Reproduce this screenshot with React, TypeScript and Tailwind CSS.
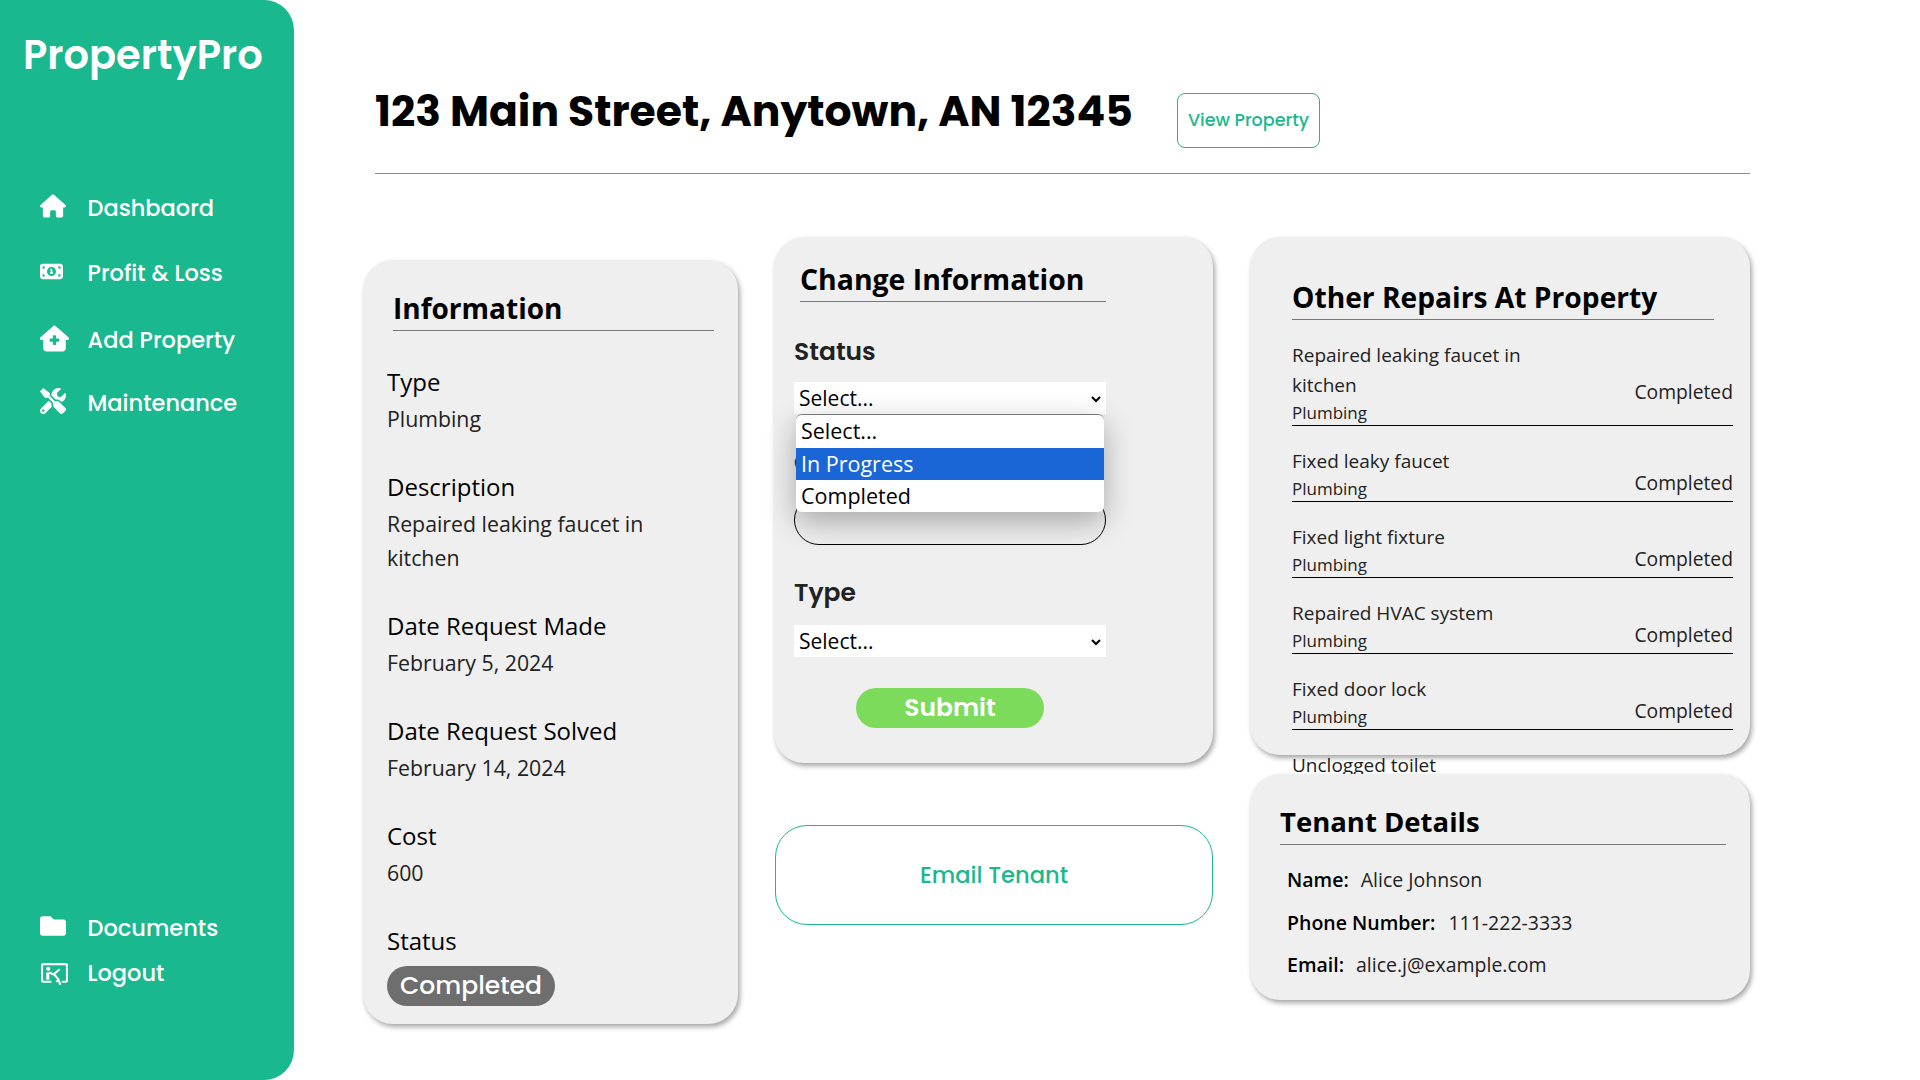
import { FaTools, FaFolder } from "react-icons/fa";
import { FaHouse, FaHouseMedical, FaMoneyBill1 } from "react-icons/fa6";

const poppins = "font-['Poppins','Inter','Noto_Sans',sans-serif]";

const repairs = ["Repaired leaking faucet in kitchen", "Fixed leaky faucet", "Fixed light fixture", "Repaired HVAC system", "Fixed door lock"];

const info = [
    { label: "Type", value: "Plumbing" },
    { label: "Description", value: "Repaired leaking faucet in kitchen" },
    { label: "Date Request Made", value: "February 5, 2024" },
    { label: "Date Request Solved", value: "February 14, 2024" },
    { label: "Cost", value: "600" },
];

function LogoutIcon() {
    return (
        <svg viewBox="0 0 28 24" className="w-[29px] h-[25px] mt-[7px]" fill="none">
            <path d="M11 19H3a1 1 0 0 1-1-1V3a1 1 0 0 1 1-1h22a1 1 0 0 1 1 1v15a1 1 0 0 1-1 1h-4" stroke="white" strokeWidth="2" />
            <circle cx="8" cy="6.5" r="2" fill="white" />
            <path d="M6 10h3v7H6z" fill="white" />
            <path d="M9 10l4 2 6-5M13 11l5 6 1.5 5M15.5 19l3-2" stroke="white" strokeWidth="2" />
        </svg>
    );
}

function NavItem({ icon, label, className }: { icon: React.ReactNode; label: string; className: string }) {
    return (
        <div className={`flex items-center text-white ${className}`}>
            <div className="w-[47.5px] flex items-center -mt-[4px]">{icon}</div>
            <span className={`${poppins} text-[22.5px] font-medium leading-none`}>{label}</span>
        </div>
    );
}

function FakeSelect() {
    return (
        <div className="w-[312px] h-[32px] bg-white flex items-center justify-between pl-[5px] pr-[4px] pt-[2px] text-[21px] text-black">
            <span>Select...</span>
            <svg viewBox="0 0 12 12" className="w-[12px] h-[12px]" fill="none">
                <path d="M2 4l4 4 4-4" stroke="black" strokeWidth="2" />
            </svg>
        </div>
    );
}

export default function App() {
    return (
        <div className="flex w-[1920px] h-[1080px] bg-white overflow-hidden font-['Open_Sans','Noto_Sans',sans-serif]">
            <aside className="w-[294px] h-full shrink-0 bg-[#1ab88e] rounded-r-[30px] flex flex-col pl-[40px]">
                <h1 className={`${poppins} -ml-[17px] mt-[27px] text-[40px] font-semibold text-white leading-[56px]`}>PropertyPro</h1>
                <NavItem className="mt-[105px] h-[40px]" icon={<FaHouse size={26} />} label="Dashbaord" />
                <NavItem className="mt-[25px] h-[40px]" icon={<FaMoneyBill1 size={23} />} label="Profit & Loss" />
                <NavItem className="mt-[27px] h-[40px]" icon={<FaHouseMedical size={29} />} label="Add Property" />
                <NavItem className="mt-[23px] h-[40px]" icon={<FaTools size={26} />} label="Maintenance" />
                <NavItem className="mt-[485px] h-[40px]" icon={<FaFolder size={26} />} label="Documents" />
                <NavItem className="mt-[5px] h-[40px]" icon={<LogoutIcon />} label="Logout" />
            </aside>

            <main className="flex-1 pl-[69px]">
                <div className="ml-[12px] w-[1375px] h-[174px] border-b border-[#8a8a8a] flex items-start">
                    <h2 className={`${poppins} mt-[82px] text-[42.5px] font-bold leading-[58px] text-black whitespace-nowrap`}>123 Main Street, Anytown, AN 12345</h2>
                    <button className={`${poppins} ml-[44px] mt-[93px] w-[143px] h-[55px] rounded-[8px] border border-[#1ab88e] bg-white text-[#1ab88e] text-[17.5px] font-medium`}>View Property</button>
                </div>

                <div className="flex items-start mt-[63px]">
                    <section className="w-[375px] h-[764px] mt-[23px] rounded-[30px] bg-[#efefef] shadow-[2px_3px_5px_rgba(0,0,0,0.35)] px-[24px] pt-[26px]">
                        <h3 className="ml-[6px] w-[321px] h-[45px] border-b border-[#777] text-[28px] font-bold leading-[44px] text-black">Information</h3>
                        <div className="mt-[31px] flex flex-col gap-[31px]">
                            {info.map((item) => (
                                <div key={item.label}>
                                    <p className="text-[24px] font-medium leading-[39px] text-black">{item.label}</p>
                                    <p className="mt-[1px] text-[21.3px] leading-[34px] text-[#222] w-[290px]">{item.value}</p>
                                </div>
                            ))}
                            <div>
                                <p className="text-[24px] font-medium leading-[39px] text-black">Status</p>
                                <span className={`${poppins} mt-[6px] inline-flex items-center h-[40px] px-[13px] rounded-full bg-[#6e6e6e] text-white text-[25px] font-medium`}>Completed</span>
                            </div>
                        </div>
                    </section>

                    <div className="w-[439px] ml-[36px]">
                        <section className="relative h-[526px] rounded-[30px] bg-[#efefef] shadow-[2px_3px_5px_rgba(0,0,0,0.35)] pl-[20px] pt-[20px]">
                            <h3 className="ml-[6px] w-[306px] h-[45px] border-b border-[#777] text-[28.4px] font-bold leading-[44px] text-black">Change Information</h3>
                            <p className={`${poppins} mt-[31px] text-[25px] font-semibold leading-[38px] text-[#222]`}>Status</p>
                            <div className="relative mt-[11px]">
                                <FakeSelect />
                                <ul className="absolute z-10 left-[2px] top-[32px] w-[308px] h-[98px] rounded-[6px] overflow-hidden bg-white border-t border-[#777] shadow-[0_10px_30px_rgba(0,0,0,0.3)] text-[21.5px] leading-[32px] text-black">
                                    <li className="pl-[5px] h-[33px]">Select...</li>
                                    <li className="pl-[5px] h-[32px] bg-[#1a66d6] text-white">In Progress</li>
                                    <li className="pl-[5px] h-[33px]">Completed</li>
                                </ul>
                            </div>
                            <p className={`${poppins} mt-[30px] text-[25px] font-semibold leading-[38px] text-[#222]`}>Cost</p>
                            <div className="w-[312px] h-[50px] mt-[13px] border border-black rounded-[30px]" />
                            <p className={`${poppins} mt-[29px] text-[25px] font-semibold leading-[38px] text-[#222]`}>Type</p>
                            <div className="mt-[13px]">
                                <FakeSelect />
                            </div>
                            <button className={`${poppins} block ml-[62px] mt-[31px] w-[188px] h-[40px] rounded-full bg-[#7ddb5c] text-white text-[25px] font-semibold`}>Submit</button>
                        </section>
                        <button className={`${poppins} mt-[62px] w-[438px] h-[100px] ml-[1px] pt-[2px] rounded-[32px] border border-[#1ab88e] bg-white text-[#1ab88e] text-[22.6px] font-medium`}>Email Tenant</button>
                    </div>

                    <div className="w-[500px] ml-[37px]">
                        <section className="h-[518px] rounded-[30px] bg-[#efefef] shadow-[2px_3px_5px_rgba(0,0,0,0.35)] pl-[42px] pt-[38px]">
                            <h3 className="w-[422px] h-[45px] border-b border-[#777] text-[28.2px] font-bold leading-[44px] text-black">Other Repairs At Property</h3>
                            <div className="mt-[20px] w-[441px] flex flex-col gap-[20px]">
                                {repairs.map((title) => (
                                    <div key={title} className="flex items-center justify-between border-b border-black">
                                        <div className="w-[245px]">
                                            <p className="text-[19px] leading-[30px] text-[#222]">{title}</p>
                                            <p className="text-[17px] leading-[25px] text-[#222]">Plumbing</p>
                                        </div>
                                        <span className="text-[19.3px] text-[#222] mt-[20px]">Completed</span>
                                    </div>
                                ))}
                                <p className="text-[19px] leading-[30px] text-[#222]">Unclogged toilet</p>
                            </div>
                        </section>
                        <section className="relative z-10 mt-[19px] h-[226px] rounded-[30px] bg-[#efefef] shadow-[2px_3px_5px_rgba(0,0,0,0.35)] pl-[30px] pt-[27px]">
                            <h3 className="w-[446px] h-[44px] border-b border-[#777] text-[27.5px] font-bold leading-[42px] text-black">Tenant Details</h3>
                            <div className="ml-[7px] mt-[20px] flex flex-col gap-[12.5px] text-[19.5px] leading-[30px] text-[#222]">
                                <p><b className="font-semibold text-black mr-[12px]">Name:</b>Alice Johnson</p>
                                <p><b className="font-semibold text-black mr-[13px]">Phone Number:</b>111-222-3333</p>
                                <p><b className="font-semibold text-black mr-[12px]">Email:</b>alice.j@example.com</p>
                            </div>
                        </section>
                    </div>
                </div>
            </main>
        </div>
    );
}
